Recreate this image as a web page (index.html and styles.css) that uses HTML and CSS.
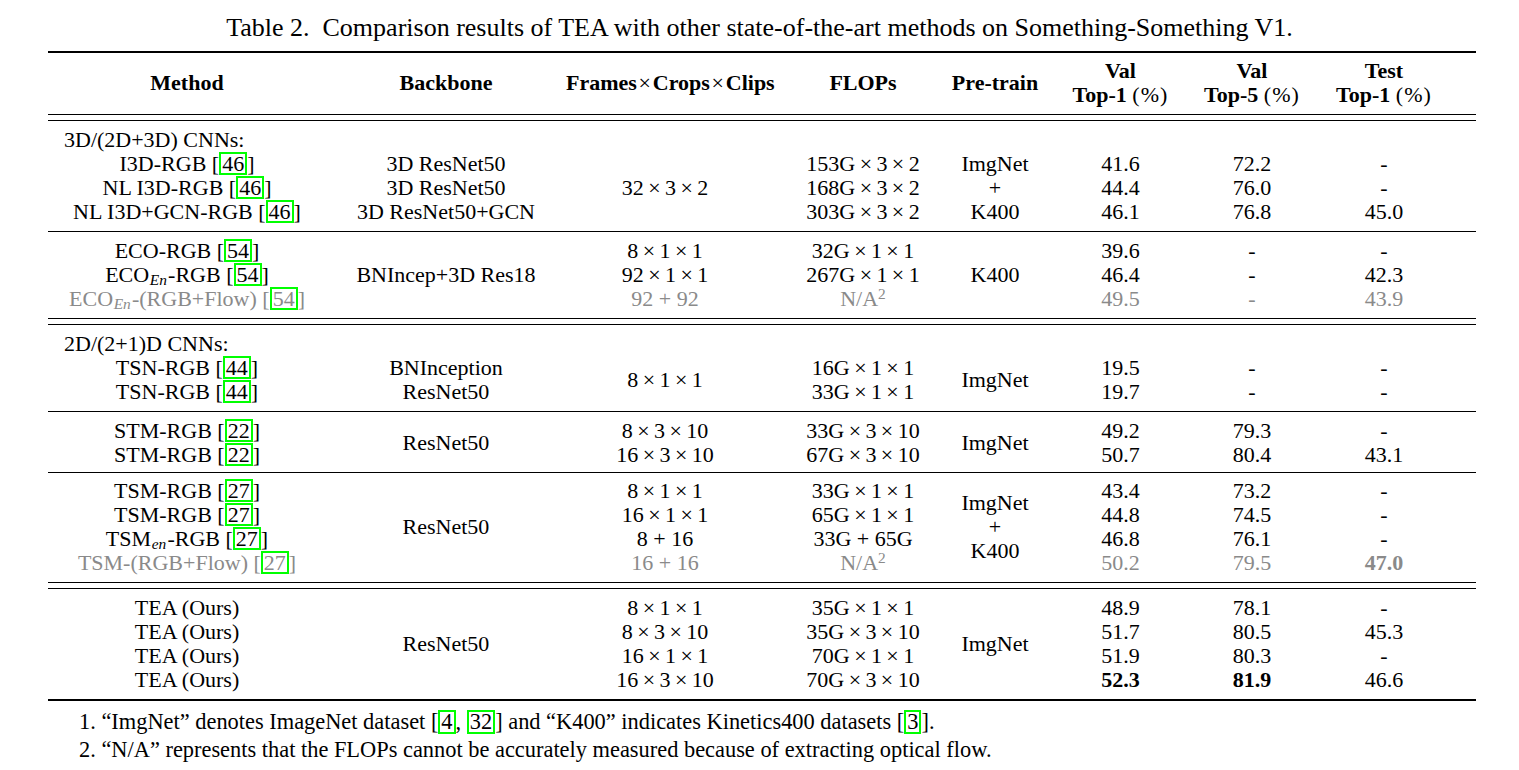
FILE: index.html
```html
<!DOCTYPE html>
<html>
<head>
<meta charset="utf-8">
<link rel="stylesheet" href="styles.css">
</head>
<body>
<div class="caption">Table 2.&nbsp; Comparison results of TEA with other state-of-the-art methods on Something-Something V1.</div>
<div class="wrap">
<table class="tbl">
<colgroup>
<col style="width:278px"><col style="width:240px"><col style="width:198px"><col style="width:176px"><col style="width:115px"><col style="width:131px"><col style="width:132px"><col style="width:158px">
</colgroup>
<thead>
<tr class="hd">
<th>Method</th>
<th>Backbone</th>
<th>Frames<span class="x hx">×</span>Crops<span class="x hx">×</span>Clips</th>
<th class="f">FLOPs</th>
<th class="p">Pre-train</th>
<th>Val<br>Top-1 <span class="n">(%)</span></th>
<th>Val<br>Top-5 <span class="n">(%)</span></th>
<th class="ts">Test<br>Top-1 <span class="n">(%)</span></th>
</tr>
</thead>
<tbody>
<tr class="sep"><td colspan="8"><div class="hl dbl"></div></td></tr>

<tr class="r"><td class="grp" colspan="8">3D/(2D+3D) CNNs:</td></tr>
<tr class="r"><td>I3D-RGB [<span class="cite">46</span>]</td><td>3D ResNet50</td><td rowspan="3">32<span class="x">×</span>3<span class="x">×</span>2</td><td class="f">153G<span class="x">×</span>3<span class="x">×</span>2</td><td class="p">ImgNet</td><td>41.6</td><td>72.2</td><td class="ts">-</td></tr>
<tr class="r"><td>NL I3D-RGB [<span class="cite">46</span>]</td><td>3D ResNet50</td><td class="f">168G<span class="x">×</span>3<span class="x">×</span>2</td><td class="p">+</td><td>44.4</td><td>76.0</td><td class="ts">-</td></tr>
<tr class="r"><td>NL I3D+GCN-RGB [<span class="cite">46</span>]</td><td>3D ResNet50+GCN</td><td class="f">303G<span class="x">×</span>3<span class="x">×</span>2</td><td class="p">K400</td><td>46.1</td><td>76.8</td><td class="ts">45.0</td></tr>

<tr class="sep"><td colspan="8"><div class="hl"></div></td></tr>

<tr class="r"><td>ECO-RGB [<span class="cite">54</span>]</td><td rowspan="3">BNIncep+3D Res18</td><td>8<span class="x">×</span>1<span class="x">×</span>1</td><td class="f">32G<span class="x">×</span>1<span class="x">×</span>1</td><td class="p" rowspan="3">K400</td><td>39.6</td><td>-</td><td class="ts">-</td></tr>
<tr class="r"><td>ECO<sub>En</sub>-RGB [<span class="cite">54</span>]</td><td>92<span class="x">×</span>1<span class="x">×</span>1</td><td class="f">267G<span class="x">×</span>1<span class="x">×</span>1</td><td>46.4</td><td>-</td><td class="ts">42.3</td></tr>
<tr class="r g"><td>ECO<sub>En</sub>-(RGB+Flow) [<span class="cite">54</span>]</td><td>92 + 92</td><td class="f">N/A<sup>2</sup></td><td>49.5</td><td>-</td><td class="ts">43.9</td></tr>

<tr class="sep"><td colspan="8"><div class="hl dbl"></div></td></tr>

<tr class="r"><td class="grp" colspan="8">2D/(2+1)D CNNs:</td></tr>
<tr class="r"><td>TSN-RGB [<span class="cite">44</span>]</td><td>BNInception</td><td rowspan="2">8<span class="x">×</span>1<span class="x">×</span>1</td><td class="f">16G<span class="x">×</span>1<span class="x">×</span>1</td><td class="p" rowspan="2">ImgNet</td><td>19.5</td><td>-</td><td class="ts">-</td></tr>
<tr class="r"><td>TSN-RGB [<span class="cite">44</span>]</td><td>ResNet50</td><td class="f">33G<span class="x">×</span>1<span class="x">×</span>1</td><td>19.7</td><td>-</td><td class="ts">-</td></tr>

<tr class="sep"><td colspan="8"><div class="hl"></div></td></tr>

<tr class="r"><td>STM-RGB [<span class="cite">22</span>]</td><td rowspan="2">ResNet50</td><td>8<span class="x">×</span>3<span class="x">×</span>10</td><td class="f">33G<span class="x">×</span>3<span class="x">×</span>10</td><td class="p" rowspan="2">ImgNet</td><td>49.2</td><td>79.3</td><td class="ts">-</td></tr>
<tr class="r"><td>STM-RGB [<span class="cite">22</span>]</td><td>16<span class="x">×</span>3<span class="x">×</span>10</td><td class="f">67G<span class="x">×</span>3<span class="x">×</span>10</td><td>50.7</td><td>80.4</td><td class="ts">43.1</td></tr>

<tr class="sep"><td colspan="8"><div class="hl tight"></div></td></tr>

<tr class="r"><td>TSM-RGB [<span class="cite">27</span>]</td><td rowspan="4">ResNet50</td><td>8<span class="x">×</span>1<span class="x">×</span>1</td><td class="f">33G<span class="x">×</span>1<span class="x">×</span>1</td><td class="p" rowspan="4">ImgNet<br>+<br>K400</td><td>43.4</td><td>73.2</td><td class="ts">-</td></tr>
<tr class="r"><td>TSM-RGB [<span class="cite">27</span>]</td><td>16<span class="x">×</span>1<span class="x">×</span>1</td><td class="f">65G<span class="x">×</span>1<span class="x">×</span>1</td><td>44.8</td><td>74.5</td><td class="ts">-</td></tr>
<tr class="r"><td>TSM<sub>en</sub>-RGB [<span class="cite">27</span>]</td><td>8 + 16</td><td class="f">33G + 65G</td><td>46.8</td><td>76.1</td><td class="ts">-</td></tr>
<tr class="r g"><td>TSM-(RGB+Flow) [<span class="cite">27</span>]</td><td>16 + 16</td><td class="f">N/A<sup>2</sup></td><td>50.2</td><td>79.5</td><td class="ts b">47.0</td></tr>

<tr class="sep"><td colspan="8"><div class="hl dbl"></div></td></tr>

<tr class="r"><td>TEA (Ours)</td><td rowspan="4">ResNet50</td><td>8<span class="x">×</span>1<span class="x">×</span>1</td><td class="f">35G<span class="x">×</span>1<span class="x">×</span>1</td><td class="p" rowspan="4">ImgNet</td><td>48.9</td><td>78.1</td><td class="ts">-</td></tr>
<tr class="r"><td>TEA (Ours)</td><td>8<span class="x">×</span>3<span class="x">×</span>10</td><td class="f">35G<span class="x">×</span>3<span class="x">×</span>10</td><td>51.7</td><td>80.5</td><td class="ts">45.3</td></tr>
<tr class="r"><td>TEA (Ours)</td><td>16<span class="x">×</span>1<span class="x">×</span>1</td><td class="f">70G<span class="x">×</span>1<span class="x">×</span>1</td><td>51.9</td><td>80.3</td><td class="ts">-</td></tr>
<tr class="r"><td>TEA (Ours)</td><td>16<span class="x">×</span>3<span class="x">×</span>10</td><td class="f">70G<span class="x">×</span>3<span class="x">×</span>10</td><td class="b">52.3</td><td class="b">81.9</td><td class="ts">46.6</td></tr>
<tr class="gap"><td colspan="8"></td></tr>
</tbody>
</table>
<div class="notes">
<p>1. “ImgNet” denotes ImageNet dataset [<span class="cite">4</span>, <span class="cite">32</span>] and “K400” indicates Kinetics400 datasets [<span class="cite">3</span>].</p>
<p>2. “N/A” represents that the FLOPs cannot be accurately measured because of extracting optical flow.</p>
</div>
</div>
</body>
</html>
```

FILE: styles.css
```css
body {
  margin: 0;
  background: #fff;
  color: #000;
  font-family: "Liberation Serif", "Times New Roman", serif;
}

.caption {
  text-align: center;
  font-size: 26px;
  line-height: 24px;
  padding-top: 16px;
  margin-bottom: 11px;
  white-space: nowrap;
}

.wrap {
  margin-left: 48px;
  width: 1428px;
}

.tbl {
  border-collapse: separate;
  border-spacing: 0;
  table-layout: fixed;
  width: 1428px;
  border-top: 2px solid #000;
  border-bottom: 2px solid #000;
  font-size: 22px;
}

.tbl th,
.tbl td {
  padding: 0;
  text-align: center;
  vertical-align: middle;
  white-space: nowrap;
  line-height: 24px;
}

.tbl th {
  font-weight: bold;
  padding-top: 6px;
}

.tbl .n {
  font-weight: normal;
  letter-spacing: 0.05em;
}

.x {
  margin: 0 0.2em;
  font-weight: normal;
}

.x.hx {
  margin: 0 0.08em;
}

.r td {
  height: 24px;
}

.tbl .f {
  padding-left: 22px;
}

.tbl .p {
  padding-right: 5px;
}

.tbl .ts {
  padding-right: 26px;
}

.tbl .grp {
  text-align: left;
  padding-left: 16px;
}

.g td {
  color: #8a8a8a;
}

.b {
  font-weight: bold;
}

.sep td {
  padding: 0;
  line-height: 0;
}

.hl {
  margin: 7px 0;
  border-top: 1px solid #000;
}

.hl.tight {
  margin: 5px 0 6px;
}

.hl.dbl {
  height: 5px;
  border-bottom: 1px solid #000;
}

.gap td {
  height: 7px;
  padding: 0;
  line-height: 0;
}

sub,
sup {
  line-height: 0;
  font-size: 0.7em;
}

sub {
  font-style: italic;
  vertical-align: -0.22em;
  margin: 0 0.08em 0 0.04em;
}

sup {
  vertical-align: 0.45em;
}

.cite {
  display: inline-block;
  line-height: 0.88em;
  padding: 0 1px;
  border: 2px solid #00ff00;
}

.notes {
  padding-left: 31px;
  padding-top: 7px;
  font-size: 22.4px;
  line-height: 28px;
  white-space: nowrap;
}

.notes p {
  margin: 0;
}
```
